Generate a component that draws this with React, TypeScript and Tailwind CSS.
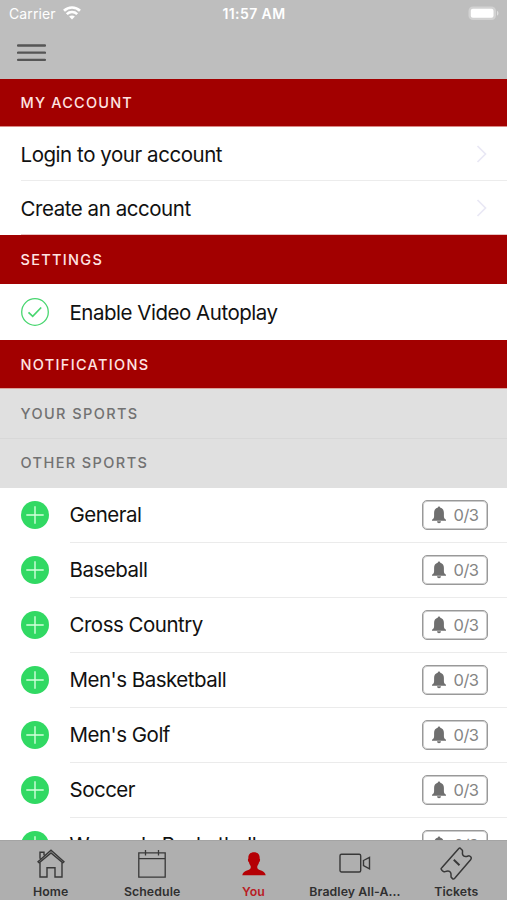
import React from "react";

const sports = [
  "General",
  "Baseball",
  "Cross Country",
  "Men's Basketball",
  "Men's Golf",
  "Soccer",
  "Women's Basketball",
];

function StatusBar() {
  return (
    <div className="grid h-[27px] grid-cols-3 items-center pr-[8px] pl-[9px] text-[14px] leading-[27px] text-white">
      <div className="flex items-center gap-[7px]">
        <span className="tracking-[0.1px]">Carrier</span>
        <svg className="-mt-px" width="18" height="14" viewBox="0 0 18 14" fill="none" stroke="white" strokeWidth="2.7">
          <path d="M1 4.8C5.5 .4 12.5 .4 17 4.8" />
          <path d="M3.8 8.1c2.9-2.8 7.5-2.8 10.4 0" />
          <path d="M6.1 10.6c1.6-1.5 4.2-1.5 5.8 0L9 13.6Z" fill="white" stroke="none" />
        </svg>
      </div>
      <span className="text-center font-semibold tracking-[0.4px] whitespace-nowrap">11:57 AM</span>
      <div className="flex items-center justify-end">
        <svg width="31" height="15" viewBox="0 0 31 15">
          <rect x=".5" y=".5" width="27.5" height="13.5" rx="4.5" fill="#d2d2d2" />
          <path d="M29 4.8c2 1 2 4 0 5Z" fill="#dedede" />
          <rect x="2.8" y="2.8" width="22.7" height="9" rx="2" fill="white" />
        </svg>
      </div>
    </div>
  );
}

function SectionHeader({ label, className }: { label: string; className: string }) {
  return (
    <h2 className={`flex shrink-0 items-center bg-[#a20000] pl-[20.5px] text-[14.5px] font-medium text-[#ffe4e2] ${className}`}>
      {label}
    </h2>
  );
}

function SubHeader({ label, className }: { label: string; className: string }) {
  return (
    <h3 className={`flex shrink-0 items-center bg-[#e0e0e0] pl-[20.5px] text-[14.5px] font-medium tracking-[1.4px] text-[#727272] ${className}`}>
      {label}
    </h3>
  );
}

function AccountRow({ label, className }: { label: string; className: string }) {
  return (
    <div className={`ml-[21px] flex shrink-0 items-center justify-between border-b pr-[20px] ${className}`}>
      <span className="-ml-[0.5px] pt-[3px] text-[20.5px] tracking-[-0.45px]">{label}</span>
      <svg className="mt-px" width="11" height="20" viewBox="0 0 11 20" fill="none" stroke="#e9e8f5" strokeWidth="1.7">
        <path d="m1.5 2 8 8-8 8" />
      </svg>
    </div>
  );
}

function SportRow({ name }: { name: string }) {
  return (
    <li className="flex h-[55px] shrink-0 pl-[21px]">
      <svg className="mt-[13px] shrink-0" width="28" height="28" viewBox="0 0 28 28">
        <circle cx="14" cy="14" r="14" fill="#31d963" />
        <path d="M5.3 14h17.4M14 5.3v17.4" stroke="#d3ffdc" strokeWidth="1.4" />
      </svg>
      <div className="ml-[21px] flex flex-1 items-center justify-between border-b border-[#ebebeb] pr-[19px]">
        <span className="-ml-[0.5px] pt-px text-[20.5px] tracking-[-0.5px]">{name}</span>
        <div className="flex h-[30px] w-[66px] items-center rounded-[5px] border border-[#999] pl-[9px] text-[#858585] inset-ring inset-ring-[#999]/50">
          <svg width="14" height="18" viewBox="0 0 14 18" fill="#6f6f6f">
            <path d="M5.7 1.7a1.3 1.3 0 0 1 2.6 0c2.4.6 3.6 2.6 3.6 5v3.4c0 1.8.5 2.8 2.1 3.7v1H0v-1c1.6-.9 2.1-1.9 2.1-3.7V6.7c0-2.4 1.2-4.4 3.6-5Z" />
            <path d="M5 15.3h4a2 2 0 0 1-4 0Z" />
          </svg>
          <span className="ml-[7.5px] text-[16.5px] tracking-[-0.5px]">0/3</span>
        </div>
      </div>
    </li>
  );
}

function HomeIcon() {
  return (
    <svg width="28" height="30" viewBox="0 0 28 30" fill="none" stroke="#383838" strokeWidth="1.4">
      <path d="M3 9.7V3.3h4v3M1 12.7 14 1.2l13 11.5-1.2 1.2L14 3.9 2.2 13.9Z" />
      <path d="M3 13.5V28h7V18.7h8V28h7V13.5" />
    </svg>
  );
}

function CalendarIcon() {
  return (
    <svg width="28" height="30" viewBox="0 0 28 30" fill="none" stroke="#383838" strokeWidth="1.3">
      <path d="M.8 3.8h26.4v24.4H.8ZM.8 9.7h26.4M7.500 1v5.500M20.500 1v5.500" />
    </svg>
  );
}

function PersonIcon() {
  return (
    <svg width="24" height="30" viewBox="0 0 24 30" fill="#b50005">
      <path d="M12 3.2c4 0 6 2.5 5.6 6.3 1 .6.3 3-.6 3.8-.3 1.7-.9 2.7-1.7 3.6v2.1c1.2 2.8 7.9 2.4 8.4 7.300H.3c.5-4.900 7.200-4.500 8.400-7.300v-2.100C7.900 16 7.300 15 7 13.300c-.9-.8-1.600-3.200-.6-3.800C6 5.700 8 3.200 12 3.200Z" />
    </svg>
  );
}

function VideoIcon() {
  return (
    <svg width="32" height="30" viewBox="0 0 32 30" fill="none" stroke="#383838" strokeWidth="1.4">
      <rect x="1" y="5.2" width="20.7" height="17.8" rx="1.5" />
      <path d="m24.500 11.500 6-3.200v11.600l-6-3.200Z" />
    </svg>
  );
}

function TicketIcon() {
  return (
    <svg width="34" height="34" viewBox="0 0 34 34" fill="none" stroke="#383838" strokeWidth="1.5" strokeLinejoin="round">
      <path d="M21.800 1.700l1.500 1.500c.9 1-.7 2.600.6 5 1.300 2.400 4.400 1.100 5.600.7 1-.3 1.400.1 2.400 1.200.7.800.6 1.500-.1 2.300L15.700 31.300c-.9 1-1.600 1-2.400.1l-1-1c-.9-1 .5-2.700-.8-5-1.300-2.400-4-1.400-5.400-.8-1.100.4-1.800.1-2.700-.8l-.7-.8c-.8-.8-.8-1.500.1-2.300L19.600 1.700c.8-.8 1.500-.8 2.200 0Z" />
      <path d="m14.800 12.700 5.700 5.600" strokeWidth="1.900" />
    </svg>
  );
}

function Tab({ label, icon, className = "text-[#303030]" }: { label: string; icon: React.ReactNode; className?: string }) {
  return (
    <button className={`flex min-w-0 flex-1 flex-col items-center ${className}`}>
      <span className="flex h-[43px] items-center pt-[2px]">{icon}</span>
      <span className="text-[12.3px] leading-[16px] font-semibold tracking-[0.1px] whitespace-nowrap">{label}</span>
    </button>
  );
}

export default function App() {
  return (
    <div className="flex h-[900px] w-[507px] flex-col overflow-hidden bg-white font-['Inter',sans-serif] text-[#111]">
      <header className="h-[79px] shrink-0 bg-[#bebebe]">
        <StatusBar />
        <svg className="mt-[16px] ml-[17px]" width="29" height="20" viewBox="0 0 29 20" stroke="#565656" strokeWidth="2.3" strokeLinecap="round" role="img" aria-label="Menu">
          <path d="M1 2.5h27M1 9.7h27M1 16.9h27" />
        </svg>
      </header>
      <main className="flex min-h-0 flex-1 flex-col overflow-hidden">
        <SectionHeader label="MY ACCOUNT" className="h-[48px] border-b border-[#db8985] tracking-[1.2px]" />
        <AccountRow label="Login to your account" className="h-[54px] border-[#ececec]" />
        <AccountRow label="Create an account" className="h-[54px] border-[#e8c4c4]" />
        <SectionHeader label="SETTINGS" className="h-[49px] pt-px tracking-[1.3px]" />
        <div className="flex h-[56px] shrink-0 items-center pl-[21px]">
          <svg width="28" height="28" viewBox="0 0 28 28" fill="none" stroke="#48d66f">
            <circle cx="14" cy="14" r="13.3" strokeWidth="1.3" />
            <path d="m7.5 14.3 4.2 4 8.5-8.8" strokeWidth="1.7" />
          </svg>
          <span className="ml-[20.5px] pt-[2px] text-[20.5px] tracking-[-0.48px]">Enable Video Autoplay</span>
        </div>
        <SectionHeader label="NOTIFICATIONS" className="h-[49px] border-b border-[#d9a29b] pt-px tracking-[1.32px]" />
        <SubHeader label="YOUR SPORTS" className="h-[50px] border-b border-[#d8d8d8]" />
        <SubHeader label="OTHER SPORTS" className="h-[49px] pb-px" />
        <ul className="flex flex-col">
          {sports.map((name) => (
            <SportRow key={name} name={name} />
          ))}
        </ul>
      </main>
      <nav className="flex h-[60px] shrink-0 border-t border-[#a4a4a4] bg-[#afafaf]">
        <Tab label="Home" icon={<HomeIcon />} />
        <Tab label="Schedule" icon={<CalendarIcon />} />
        <Tab label="You" icon={<PersonIcon />} className="text-[#b91c24]" />
        <Tab label="Bradley All-A..." icon={<VideoIcon />} />
        <Tab label="Tickets" icon={<TicketIcon />} />
      </nav>
    </div>
  );
}
